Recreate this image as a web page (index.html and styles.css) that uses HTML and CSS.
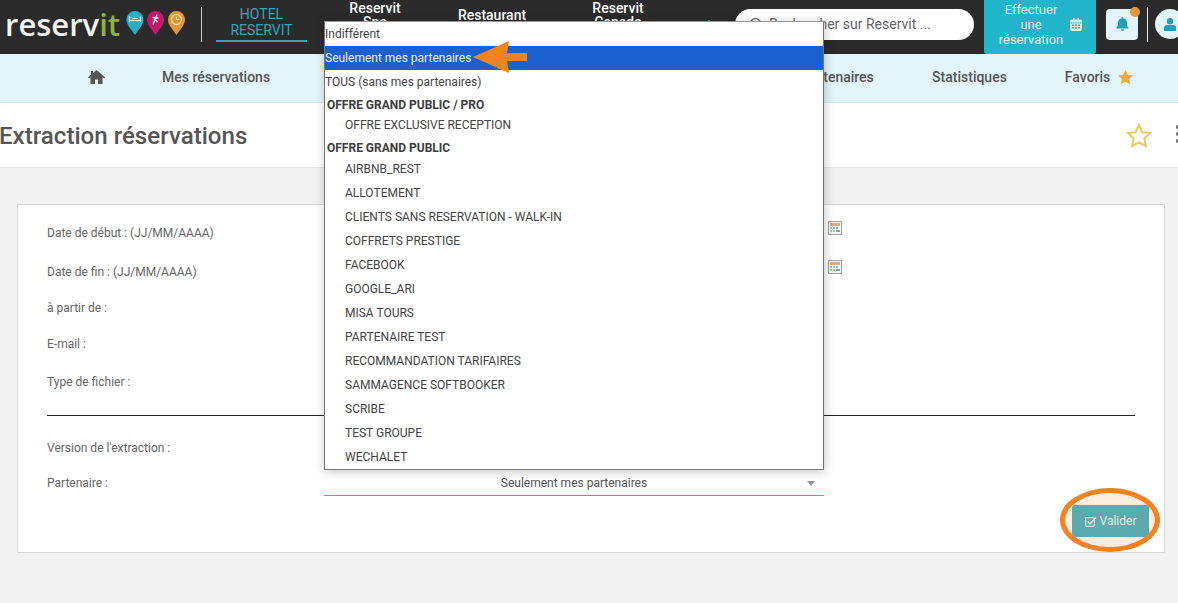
FILE: index.html
```html
<!DOCTYPE html>
<html lang="fr">
<head>
<meta charset="utf-8">
<title>Extraction réservations</title>
<link rel="stylesheet" href="styles.css">
</head>
<body>
<header class="topbar">
  <div class="logo">
    <span class="logo-word">reserv<span class="logo-it">it</span></span>
    <svg class="logo-pins" width="60" height="24" viewBox="0 0 60 24">
      <path fill="#2aaec6" d="M9 24 C6 19 0.500 14.500 0.500 8.500 A8.500 8.500 0 0 1 17.500 8.500 C17.500 14.500 12 19 9 24Z"/>
      <path fill="none" stroke="#e8f8fa" stroke-width="1.200" d="M3.500 5.500V11M14.500 5.500V11M3.500 9.500H14.500M6 7.500H12"/>
      <path fill="#c4186d" d="M29.500 24 C26.500 19 21 14.500 21 8.500 A8.500 8.500 0 0 1 38 8.500 C38 14.500 32.500 19 29.500 24Z"/>
      <path fill="none" stroke="#fbe3ef" stroke-width="1.500" d="M31 3.500 L29 8.500 L31.500 11 M29 8.500 L27 13.500 M26.500 6.500 L32.500 7"/>
      <path fill="#e2973a" d="M50.500 24 C47.500 19 42 14.500 42 8.500 A8.500 8.500 0 0 1 59 8.500 C59 14.500 53.500 19 50.500 24Z"/>
      <circle cx="50.500" cy="8.500" r="5" fill="none" stroke="#f9e0b0" stroke-width="1.200"/>
      <path fill="none" stroke="#f9e0b0" stroke-width="1" d="M50.500 5.500V8.500H53.500"/>
    </svg>
  </div>
  <div class="logo-sep"></div>
  <nav class="products">
    <a class="product product-active">HOTEL<br>RESERVIT</a>
    <a class="product product-spa">Reservit<br>Spa</a>
    <a class="product product-resto">Restaurant<br>Reservit</a>
    <a class="product product-canada">Reservit<br>Canada</a>
  </nav>
  <div class="chevron">›</div>
  <div class="search">
    <svg class="search-icon" width="15" height="15" viewBox="0 0 15 15"><circle cx="6.500" cy="6.500" r="5" fill="none" stroke="#777" stroke-width="1.500"/><path d="M10.500 10.500 L14 14" stroke="#777" stroke-width="1.500"/></svg>
    <span>Rechercher sur Reservit ...</span>
  </div>
  <a class="book">
    <span class="book-text">Effectuer<br>une<br>réservation</span>
    <svg width="12" height="13" viewBox="0 0 12 13"><path fill="#d8f2f6" d="M1.500 1.500H3V0h1.500v1.500h3V0H9v1.500h1.500A1.500 1.500 0 0 1 12 3v8.500a1.500 1.500 0 0 1-1.500 1.500h-9A1.500 1.500 0 0 1 0 11.500V3a1.500 1.500 0 0 1 1.500-1.500Z"/><path fill="#21b5cc" d="M1 4.500h10v.8H1z"/><path fill="#21b5cc" d="M2 6.500h2v1.500H2zM5 6.500h2v1.500H5zM8 6.500h2v1.500H8zM2 9h2v1.500H2zM5 9h2v1.500H5zM8 9h2v1.500H8z"/></svg>
  </a>
  <div class="bell">
    <svg width="13" height="14" viewBox="0 0 13 14"><path fill="#1f9fb8" d="M6.500 0a1 1 0 0 1 1 1v.6A4.300 4.300 0 0 1 11 6c0 3 .6 4 2 5.500H0C1.400 10 2 9 2 6a4.300 4.300 0 0 1 3.500-4.400V1a1 1 0 0 1 1-1ZM4.800 12.300h3.400a1.700 1.700 0 0 1-3.400 0Z"/></svg>
    <span class="bell-dot"></span>
  </div>
  <div class="user-sep"></div>
  <div class="avatar">
    <svg width="12" height="13" viewBox="0 0 12 13"><circle cx="6" cy="3.300" r="3.200" fill="#1f9fb8"/><path fill="#1f9fb8" d="M0 13V10a3 3 0 0 1 3-3h6a3 3 0 0 1 3 3v3Z"/></svg>
  </div>
</header>

<nav class="mainnav">
  <svg class="home" width="17" height="14" viewBox="0 0 17 14"><path fill="#555" d="M8.500 0 17 7.300l-1 1.200L14.500 7.300V14H10V9.500H7V14H2.500V7.300L1 8.500 0 7.300 3 4.700V1h2v2L8.500 0Z"/></svg>
  <a class="nav-item nav-resa">Mes réservations</a>
  <a class="nav-item nav-part">Mes partenaires</a>
  <a class="nav-item nav-stats">Statistiques</a>
  <a class="nav-item nav-fav">Favoris
    <svg width="15" height="14" viewBox="0 0 15 14"><path fill="#f4ac2b" d="M7.500 0l2.300 4.700 5.200.7-3.800 3.600.9 5.100-4.600-2.400-4.600 2.400.9-5.100L0 5.400l5.200-.7Z"/></svg>
  </a>
</nav>

<section class="titlebar">
  <h1 class="page-title">Extraction réservations</h1>
  <svg class="title-star" width="26" height="25" viewBox="0 0 26 25"><path fill="none" stroke="#eec85e" stroke-width="2" d="M13 2l3.300 7.200 7.700.9-5.700 5.300 1.500 7.700L13 19.300l-6.800 3.800 1.500-7.700L2 10.100l7.700-.9Z"/></svg>
  <div class="title-more"><i></i><i></i><i></i></div>
</section>

<main class="content">
  <form class="card">
    <div class="row row-start"><label>Date de début : (JJ/MM/AAAA)</label>
      <svg class="cal-icon" width="14" height="14" viewBox="0 0 14 14"><rect x=".5" y=".5" width="13" height="13" fill="#f4f6f6" stroke="#a0a0a0"/><rect x="2" y="2" width="10" height="3" fill="#d3b08f"/><path fill="#9cc8d4" d="M2 6h2v2H2zM5 6h2v2H5zM8 6h2v2H8z"/><path fill="#a8cf9c" d="M2 9h2v2H2zM5 9h2v2H5z"/><path fill="#8aa3ad" d="M8 9h4v2H8z"/></svg>
    </div>
    <div class="row row-end"><label>Date de fin : (JJ/MM/AAAA)</label>
      <svg class="cal-icon" width="14" height="14" viewBox="0 0 14 14"><rect x=".5" y=".5" width="13" height="13" fill="#f4f6f6" stroke="#a0a0a0"/><rect x="2" y="2" width="10" height="3" fill="#d3b08f"/><path fill="#9cc8d4" d="M2 6h2v2H2zM5 6h2v2H5zM8 6h2v2H8z"/><path fill="#a8cf9c" d="M2 9h2v2H2zM5 9h2v2H5z"/><path fill="#8aa3ad" d="M8 9h4v2H8z"/></svg>
    </div>
    <div class="row row-from"><label>à partir de :</label></div>
    <div class="row row-mail"><label>E-mail :</label></div>
    <div class="row row-type"><label>Type de fichier :</label></div>
    <hr class="rule">
    <div class="row row-version"><label>Version de l'extraction :</label></div>
    <div class="row row-partner">
      <label>Partenaire :</label>
      <div class="fake-select"><span>Seulement mes partenaires</span><i class="caret"></i></div>
    </div>
    <div class="actions">
      <button type="button" class="submit">
        <svg width="12" height="11" viewBox="0 0 12 11"><rect x=".6" y="1.600" width="8.800" height="8.800" rx="1.500" fill="none" stroke="#e6f5f5" stroke-width="1.200"/><path d="M2.700 5.500 5 7.800 11 1.500" fill="none" stroke="#e6f5f5" stroke-width="1.500"/></svg>
        Valider
      </button>
    </div>
  </form>
</main>

<ul class="dropdown">
  <li class="opt">Indifférent</li>
  <li class="opt opt-selected">Seulement mes partenaires</li>
  <li class="opt">TOUS (sans mes partenaires)</li>
  <li class="group group-first">OFFRE GRAND PUBLIC / PRO</li>
  <li class="sub sub-short">OFFRE EXCLUSIVE RECEPTION</li>
  <li class="group group-next">OFFRE GRAND PUBLIC</li>
  <li class="sub sub-after">AIRBNB_REST</li>
  <li class="sub">ALLOTEMENT</li>
  <li class="sub">CLIENTS SANS RESERVATION - WALK-IN</li>
  <li class="sub">COFFRETS PRESTIGE</li>
  <li class="sub">FACEBOOK</li>
  <li class="sub">GOOGLE_ARI</li>
  <li class="sub">MISA TOURS</li>
  <li class="sub">PARTENAIRE TEST</li>
  <li class="sub">RECOMMANDATION TARIFAIRES</li>
  <li class="sub">SAMMAGENCE SOFTBOOKER</li>
  <li class="sub">SCRIBE</li>
  <li class="sub">TEST GROUPE</li>
  <li class="sub">WECHALET</li>
</ul>

<svg class="mark-arrow" width="54" height="32" viewBox="0 0 54 32"><path fill="#f58220" d="M0 16 L36 0 L34 12 L54 12 L54 20 L34 20 L36 32Z"/></svg>
<div class="mark-ring"></div>
</body>
</html>
```
FILE: styles.css
```css
* { box-sizing: border-box; }
html, body { margin: 0; height: 100%; overflow: hidden; }
body {
  width: 1178px;
  height: 603px;
  position: relative;
  background: #f1f1f1;
  font-family: Roboto, "Liberation Sans", sans-serif;
  color: #555;
}
a { display: block; }

.topbar {
  height: 54px;
  padding-bottom: 6px;
  background: #2b2b2b;
  display: flex;
  align-items: center;
  overflow: hidden;
  color: #fff;
}
.logo { display: flex; align-items: center; width: 200px; padding-left: 5px; flex: none; }
.logo-word {
  font-family: "Open Sans", sans-serif;
  font-size: 31px;
  font-weight: 600;
  line-height: 40px;
  color: #f4f4f4;
}
.logo-it { color: #8db23f; }
.logo-pins { margin-left: 6px; margin-top: -2px; flex: none; }
.logo-sep { width: 1px; height: 35px; background: #cfcfcf; margin-left: 1px; flex: none; }

.products { display: flex; align-items: center; flex: none; }
.product {
  text-align: center;
  font-size: 14px;
  line-height: 16px;
  font-weight: 500;
  color: #fff;
}
.product-active {
  width: 91px;
  margin-left: 14px;
  color: #2aa7bb;
  font-weight: 400;
  padding-bottom: 2px;
  border-bottom: 2px solid #2aa7bb;
}
.product-spa { width: 60px; margin: 0 0 18px 38px; line-height: 14px; }
.product-resto { width: 90px; margin: 0 0 2px 42px; }
.product-canada { width: 60px; margin: 0 0 18px 51px; line-height: 14px; }
.chevron { color: #2aa7bb; font-size: 22px; line-height: 22px; margin-left: 59px; width: 20px; flex: none; }

.search {
  width: 239px;
  height: 31px;
  margin-left: 8px;
  background: #fff;
  border-radius: 16px;
  display: flex;
  align-items: center;
  gap: 5px;
  padding-left: 14px;
  color: #666;
  font-size: 14px;
  flex: none;
}
.search-icon { flex: none; }

.book {
  width: 112px;
  height: 54px;
  margin: 0 0 -6px 10px;
  padding: 0 0 6px 11px;
  background: #21b5cc;
  border-radius: 0 0 3px 3px;
  color: #e3f6f9;
  font-size: 13px;
  line-height: 15px;
  display: flex;
  align-items: center;
  gap: 3px;
  flex: none;
}
.book-text { width: 72px; text-align: center; display: block; }
.bell {
  width: 32px;
  height: 31px;
  margin-left: 10px;
  background: #e4f5f9;
  border-radius: 4px;
  display: flex;
  align-items: center;
  justify-content: center;
  position: relative;
  flex: none;
}
.bell-dot {
  position: absolute;
  top: -2px;
  right: -2px;
  width: 10px;
  height: 10px;
  border-radius: 50%;
  background: #e2973a;
}
.user-sep { width: 1px; height: 35px; background: #e8e8e8; margin-left: 9px; flex: none; }
.avatar {
  width: 30px;
  height: 30px;
  border-radius: 50%;
  background: #e4f5f9;
  margin-left: 7px;
  display: flex;
  align-items: center;
  justify-content: center;
  flex: none;
}

.mainnav {
  height: 49px;
  padding-bottom: 2px;
  background: #e4f5f9;
  border-bottom: 1px solid #d5e8ec;
  display: flex;
  align-items: center;
  font-size: 14px;
  font-weight: 500;
  color: #555;
}
.home { margin-left: 88px; flex: none; }
.nav-item { white-space: nowrap; }
.nav-resa { margin-left: 57px; }
.nav-part { margin-left: 502px; width: 102px; }
.nav-stats { margin-left: 58px; }
.nav-fav { margin-left: 58px; display: flex; align-items: center; gap: 8px; }

.titlebar {
  height: 64px;
  padding-top: 2px;
  background: #fff;
  display: flex;
  align-items: center;
  box-shadow: 0 1px 1px rgba(0,0,0,.04);
}
.page-title {
  margin: 0 0 0 -1px;
  font-size: 24.1px;
  font-weight: 500;
  color: #555;
  white-space: nowrap;
  flex: 1;
}
.title-star { flex: none; margin: -2px 24px 0 0; }
.title-more { width: 2px; margin-top: -4px; flex: none; display: flex; flex-direction: column; gap: 3px; }
.title-more i { display: block; width: 4px; height: 4px; border-radius: 50%; background: #666; }

.content { padding: 37px 13px 0 17px; }
.card {
  height: 349px;
  background: #fff;
  border: 1px solid #d8d8d8;
  padding: 0 29px;
  font-size: 12px;
  color: #666;
}
.row { display: flex; align-items: center; position: relative; height: 20px; }
.row label { display: block; }
.row-start { margin-top: 18px; }
.row-end { margin-top: 19px; }
.row-from { margin-top: 16px; }
.row-mail { margin-top: 16px; }
.row-type { margin-top: 18px; }
.rule { margin: 23px 0 0; border: 0; border-top: 1px solid #222; }
.row-version { margin-top: 22px; }
.row-partner { margin-top: 15px; }
.cal-icon { position: absolute; left: 781px; top: -2px; }
.fake-select {
  position: absolute;
  left: 277px;
  top: -3px;
  width: 500px;
  height: 26px;
  border-bottom: 1px solid #39b3c8;
  text-align: center;
  line-height: 27px;
  color: #555;
}
.caret {
  position: absolute;
  right: 9px;
  top: 11px;
  border: 4px solid transparent;
  border-top: 5px solid #999;
  border-bottom: 0;
}
.actions { display: flex; justify-content: flex-end; margin: 12px -14px 0 0; }
.submit {
  width: 77px;
  height: 32px;
  background: #42b3c5;
  border: 0;
  border-radius: 3px;
  color: #eef8f8;
  font: 12px Roboto, sans-serif;
  display: flex;
  align-items: center;
  justify-content: center;
  gap: 3px;
  padding: 0;
}

.dropdown {
  position: absolute;
  left: 324px;
  top: 21px;
  width: 500px;
  height: 449px;
  margin: 0;
  padding: 0;
  list-style: none;
  background: #fff;
  border: 1px solid #767676;
  border-top-color: #999;
  box-shadow: 1px 2px 10px rgba(0,0,0,.22);
  font-size: 12px;
  color: #444;
}
.dropdown li { height: 24px; line-height: 24px; white-space: nowrap; }
.opt { padding-left: 0; }
.dropdown .opt-selected { background: #1a60cf; color: #e9f1fb; }
.dropdown .group { font-weight: 700; padding-left: 2px; height: 20px; line-height: 20px; color: #3d3d3d; }
.dropdown .group-first { margin-top: 1px; }
.sub { padding-left: 20px; }
.dropdown .sub-short { height: 20px; line-height: 20px; }
.dropdown .group-next { margin-top: 3px; }
.dropdown .sub-after { height: 23px; line-height: 22px; }

.mark-arrow { position: absolute; left: 473px; top: 41px; }
.mark-ring {
  position: absolute;
  left: 1060px;
  top: 488px;
  width: 100px;
  height: 64px;
  border: 5px solid #f58220;
  border-radius: 50%;
  background: rgba(245,130,32,.14);
}
```
